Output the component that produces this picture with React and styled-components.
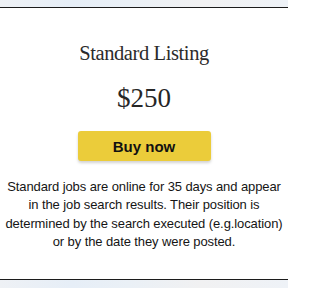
import React from "react";
import styled, { createGlobalStyle } from "styled-components";

const GlobalStyle = createGlobalStyle`
  html, body {
    margin: 0;
    padding: 0;
    background: #fff;
  }
`;

const Page = styled.div`
  width: 288px;
  height: 288px;
  overflow: hidden;
  display: flex;
  flex-direction: column;
  background: linear-gradient(90deg, #eef1f5 0%, #e6eef7 25%, #eaf0f6 45%, #f1f1f2 70%, #eef2f7 100%);
`;

const Strip = styled.div`
  height: ${(p) => p.h}px;
  flex-shrink: 0;
`;

const Card = styled.section`
  flex-shrink: 0;
  box-sizing: border-box;
  height: 273px;
  background: #fff;
  border-top: 1px solid #1c1c1c;
  border-bottom: 1px solid #1c1c1c;
  display: flex;
  flex-direction: column;
  align-items: center;
  padding-top: 33px;
`;

const Title = styled.h2`
  margin: 0;
  font-family: "Liberation Serif", "Times New Roman", serif;
  font-weight: 400;
  font-size: 20.5px;
  letter-spacing: -0.4px;
  line-height: 24px;
  color: #2b2b2b;
`;

const Price = styled.div`
  margin-top: 17px;
  font-family: "Liberation Serif", "Times New Roman", serif;
  font-size: 27px;
  line-height: 32px;
  color: #262626;
`;

const BuyButton = styled.button`
  margin-top: 17px;
  width: 133px;
  height: 30px;
  border: none;
  border-radius: 3px;
  background: #ebcc3a;
  box-shadow: 0 2px 3px rgba(0, 0, 0, 0.18);
  font-family: "Liberation Sans", Arial, sans-serif;
  font-weight: 700;
  font-size: 15px;
  color: #111;
  cursor: pointer;
`;

const Description = styled.p`
  margin: 17px 0 0;
  padding: 0 2px;
  text-align: center;
  font-family: "Liberation Sans", Arial, sans-serif;
  font-size: 13px;
  letter-spacing: -0.1px;
  line-height: 18.3px;
  color: #151515;
`;

export default function App() {
  return (
    <>
      <GlobalStyle />
      <Page>
        <Strip h={7} />
        <Card>
          <Title>Standard Listing</Title>
          <Price>$250</Price>
          <BuyButton>Buy now</BuyButton>
          <Description>
            Standard jobs are online for 35 days and appear in the job search
            results. Their position is determined by the search executed
            (e.g.location) or by the date they were posted.
          </Description>
        </Card>
      </Page>
    </>
  );
}
